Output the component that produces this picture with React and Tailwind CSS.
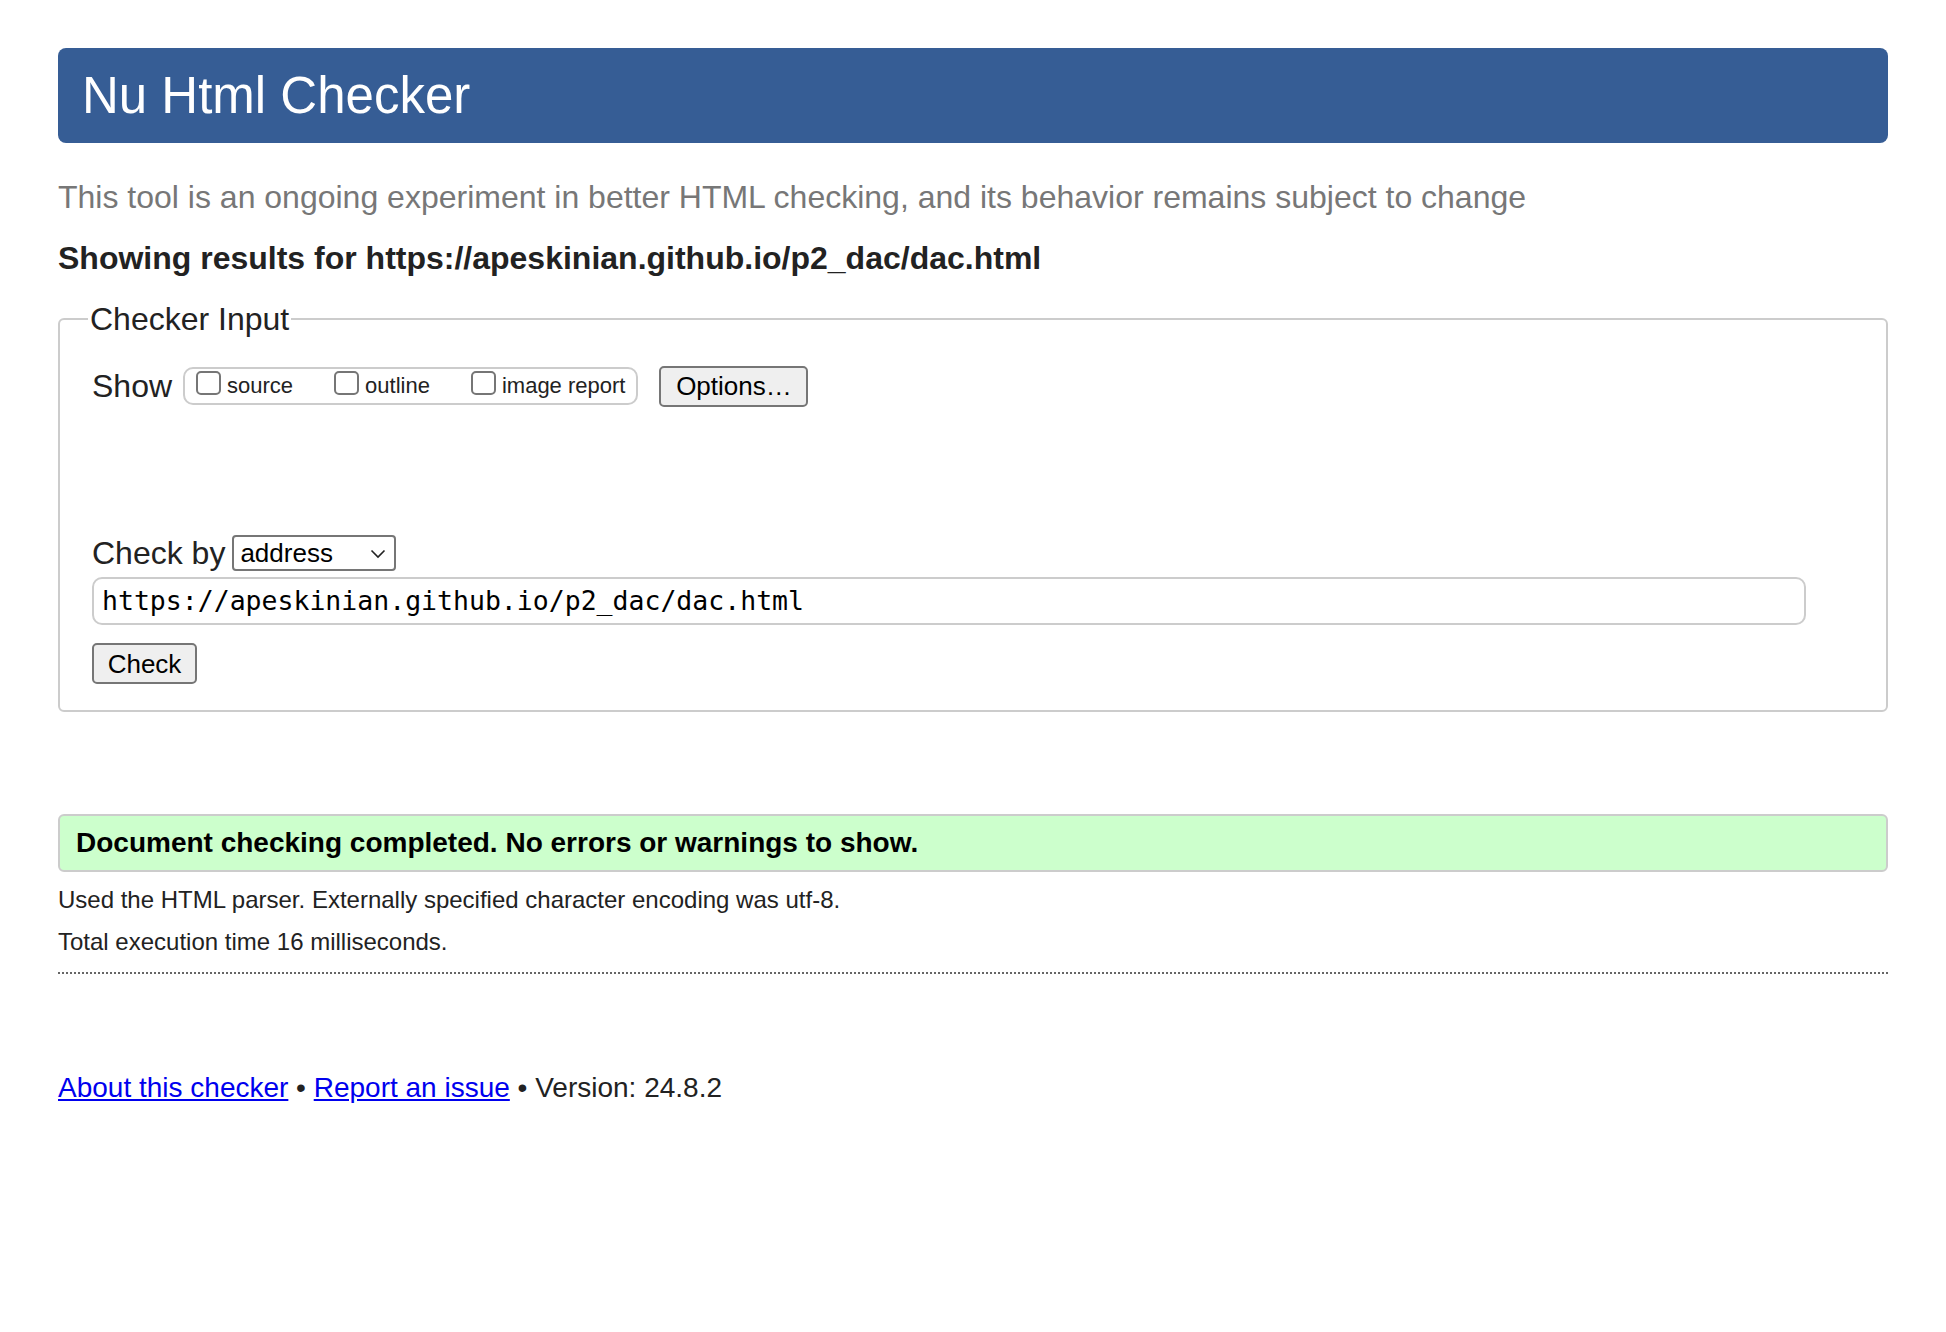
export default function App() {
  return (
    <div
      className="min-h-screen bg-white px-[58px] pt-[48px] text-[#222]"
      style={{ fontFamily: '"Liberation Sans", Arial, sans-serif' }}
    >
      <h1 className="h-[95px] flex items-center px-[24px] rounded-[8px] bg-[#365d95] text-white text-[51px] leading-none">
        Nu Html Checker
      </h1>

      <p className="mt-[34px] text-[32px] leading-[40px] text-[#777]">
        This tool is an ongoing experiment in better HTML checking, and its behavior remains subject to change
      </p>

      <p className="mt-[21px] text-[32px] leading-[40px] font-bold text-[#222]">
        Showing results for https://apeskinian.github.io/p2_dac/dac.html
      </p>

      <fieldset className="mt-[21px] border-2 border-[#ccc] rounded-[6px] px-[32px] pb-[26px] pt-[26px]">
        <legend className="px-[2px] ml-[-4px] text-[32px] leading-[40px] text-[#222]">Checker Input</legend>

        <div className="flex items-center h-[42px]">
          <span className="text-[32px] leading-none mr-[11px]">Show</span>
          <div className="flex items-center h-[38px] border-2 border-[#ccc] rounded-[10px] pl-[11px] pr-[11px] text-[22px] leading-none">
            <label className="flex items-center">
              <span className="w-[25px] h-[24px] border-2 border-[#767676] rounded-[5px] bg-white mb-[6px] mr-[6px]" />
              source
            </label>
            <label className="flex items-center ml-[41px]">
              <span className="w-[25px] h-[24px] border-2 border-[#767676] rounded-[5px] bg-white mb-[6px] mr-[6px]" />
              outline
            </label>
            <label className="flex items-center ml-[41px]">
              <span className="w-[25px] h-[24px] border-2 border-[#767676] rounded-[5px] bg-white mb-[6px] mr-[6px]" />
              image report
            </label>
          </div>
          <button className="ml-[21px] h-[41px] w-[149px] border-2 border-[#767676] rounded-[5px] bg-[#efefef] text-[26px] leading-none text-black">
            Options…
          </button>
        </div>

        <div className="h-[128px]" />

        <div className="flex items-center h-[36px]">
          <span className="text-[32px] leading-none mr-[7px]">Check by</span>
          <div className="relative w-[164px] h-[36px] border-2 border-[#767676] rounded-[4px] flex items-center pl-[6px] text-[26px] leading-none text-black">
            address
            <svg className="absolute right-[8px] top-[12px]" width="16" height="10" viewBox="0 0 16 10" fill="none">
              <path d="M1.5 1.5 L8 8 L14.5 1.5" stroke="#222" strokeWidth="1.6" />
            </svg>
          </div>
        </div>

        <div
          className="mt-[6px] mr-[48px] h-[48px] border-2 border-[#ccc] rounded-[10px] flex items-center px-[8px] text-[26.5px] leading-none text-black"
          style={{ fontFamily: '"DejaVu Sans Mono", "Liberation Mono", monospace' }}
        >
          https://apeskinian.github.io/p2_dac/dac.html
        </div>

        <button className="block mt-[18px] h-[41px] w-[105px] border-2 border-[#767676] rounded-[5px] bg-[#efefef] text-[26px] leading-none text-black">
          Check
        </button>
      </fieldset>

      <div className="mt-[102px] h-[58px] border-2 border-[#ccc] rounded-[6px] bg-[#ccffcc] flex items-center px-[16px] text-[28px] leading-none font-bold text-black">
        Document checking completed. No errors or warnings to show.
      </div>

      <p className="mt-[14px] text-[24px] leading-[28px]">
        Used the HTML parser. Externally specified character encoding was utf-8.
      </p>
      <p className="mt-[14px] text-[24px] leading-[28px]">Total execution time 16 milliseconds.</p>
      <div className="mt-[16px] border-t-2 border-dotted border-[#666]" />

      <p className="mt-[96px] text-[28px] leading-[36px]">
        <a href="#" className="text-[#00e] underline">About this checker</a>
        {" • "}
        <a href="#" className="text-[#00e] underline">Report an issue</a>
        {" • Version: 24.8.2"}
      </p>
    </div>
  );
}
